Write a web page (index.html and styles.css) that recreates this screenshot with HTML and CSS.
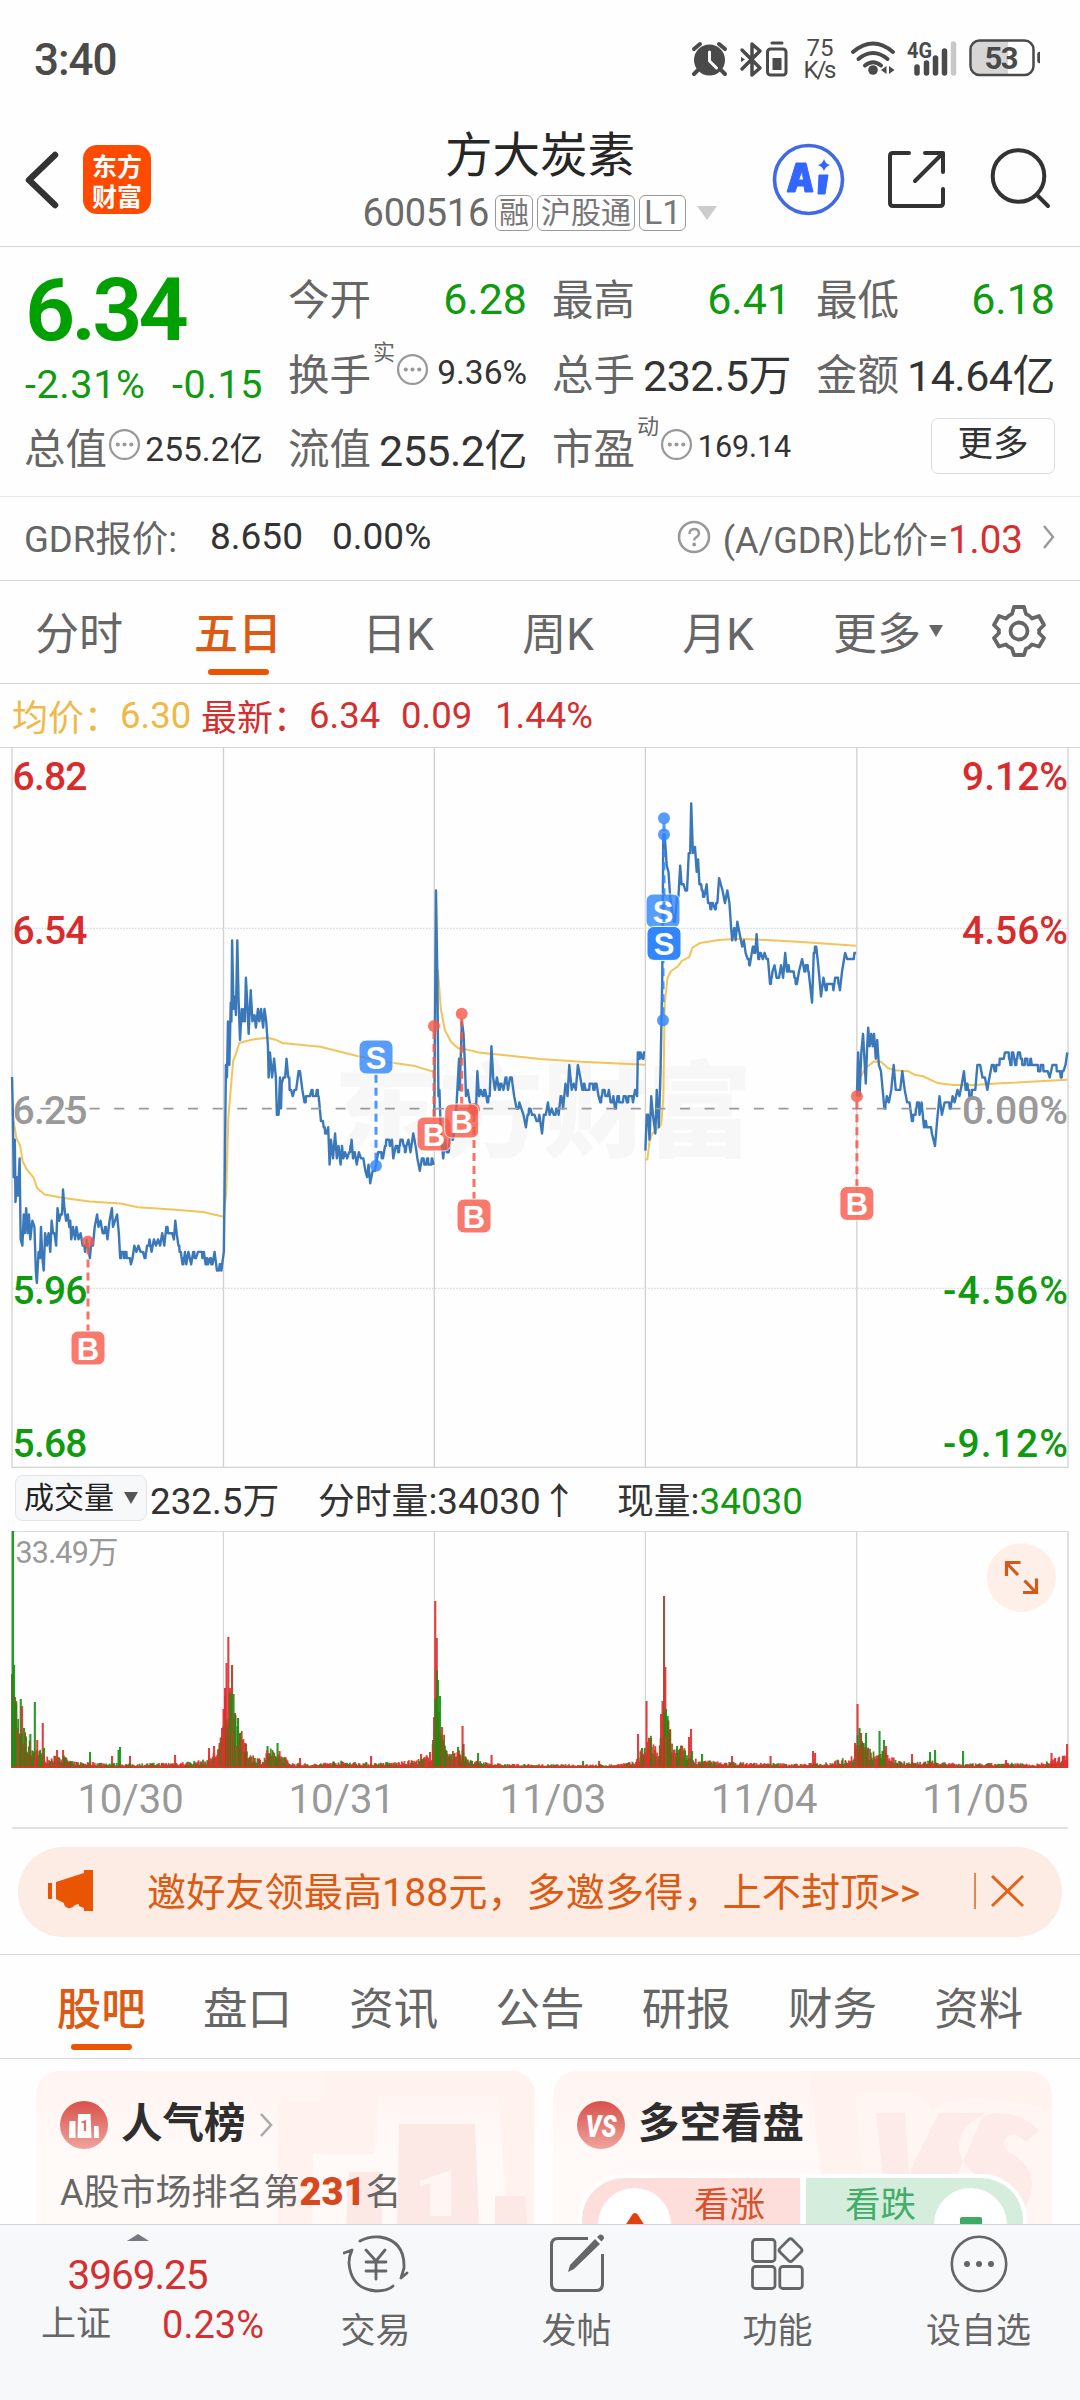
FILE: index.html
```html
<!DOCTYPE html>
<html lang="zh-CN">
<head>
<meta charset="utf-8">
<title>方大炭素 600516</title>
<link rel="stylesheet" href="styles.css">
</head>
<body>
<div class="screen">
  <div class="status">
    <span class="clock">3:40</span>
    <svg class="status-icons" width="360" height="60" viewBox="680 30 360 60">
      <g fill="#4a4a4a" stroke="#4a4a4a" stroke-linecap="round">
        <circle cx="709.500" cy="60" r="15.500" stroke="none"/>
        <path d="M694 49l6-5M725 49l-6-5M698 70l-4 4M721 70l4 4" stroke-width="4" fill="none"/>
        <path d="M709.500 52v9l7 7" stroke="#fff" stroke-width="3" fill="none"/>
        <path d="M742 50l18 18-8 7V44l8 7-18 18" fill="none" stroke-width="3.500" stroke-linejoin="round"/>
        <path d="M741 57l4 2.500-4 2.500z" stroke="none"/>
        <path d="M772 43h10" stroke-width="3"/>
        <rect x="767.500" y="49" width="18.500" height="26" rx="3" fill="none" stroke-width="3"/>
        <rect x="772.500" y="58" width="9" height="12" stroke="none"/>
        <path d="M853 52q20-17 40 0M858.500 59q14.500-12 29 0M865 65.500q8-6.500 16 0" fill="none" stroke-width="4"/>
        <circle cx="873" cy="70" r="4.800" stroke="none"/>
        <path d="M881 70l5.500-4v8zM894.500 70l-5.500-4v8z" stroke="none"/>
        <path d="M917 67v6M926.500 63v10M935.500 58v15M944.500 51v22" stroke-width="5.500"/>
        <path d="M953.500 44v29" stroke="#c8c8c8" stroke-width="5.500"/>
        <path d="M980 41h28v34h-28q-8 0-8-8V49q0-8 8-8z" fill="#d6d6d6" stroke="none"/>
        <rect x="970.500" y="40.500" width="63" height="34.500" rx="9" fill="none" stroke-width="2.500"/>
        <path d="M1039.500 54v7" stroke-width="4.500"/>
      </g>
      <g class="status-text">
        <text x="820" y="56" font-size="24" text-anchor="middle">75</text>
        <text x="820" y="78" font-size="24" text-anchor="middle" textLength="33">K/s</text>
        <text x="907" y="58" font-size="22" font-weight="700" textLength="25" lengthAdjust="spacingAndGlyphs">4G</text>
        <text x="1001.500" y="69" font-size="31" font-weight="700" text-anchor="middle" textLength="34">53</text>
      </g>
    </svg>
  </div>

  <header class="header">
    <svg class="back" width="36" height="60" viewBox="0 0 36 60"><path d="M31 5L5 30l26 25" fill="none" stroke="#333" stroke-width="6.500" stroke-linecap="round" stroke-linejoin="round"/></svg>
    <div class="logo"><span>东方</span><span>财富</span></div>
    <div class="title">
      <h1>方大炭素</h1>
      <div class="sub"><span class="code">600516</span><span class="tag">融</span><span class="tag">沪股通</span><span class="tag tag-l">L1</span><i class="caret"></i></div>
    </div>
    <svg class="actions" width="290" height="80" viewBox="770 140 290 80">
      <circle cx="808.500" cy="179.500" r="34" fill="none" stroke="#4169e6" stroke-width="3.600"/>
      <path fill="#3366ff" stroke="#3366ff" stroke-width="1" stroke-linejoin="round" fill-rule="evenodd" d="M796 163h10l7 29h-8l-1-6h-7l-2 6h-8zM802 171l-3.500 9h5zM819 175h9l-3 19h-7z"/>
      <path fill="#3366ff" d="M824 159q1.500 5 6 6-4.500 1.500-6 6-1.500-4.500-6-6 4.500-1 6-6z"/>
      <g fill="none" stroke="#333" stroke-width="4" stroke-linecap="round" stroke-linejoin="round">
        <path d="M909 153h-16q-3 0-3 3v47q0 3 3 3h47q3 0 3-3v-14M925 153h18v19M943 153l-28 28"/>
        <circle cx="1018.500" cy="176" r="25.800"/><path d="M1037 195l11 11"/>
      </g>
    </svg>
  </header>

  <section class="quote">
    <div class="price">6.34</div>
    <div class="cell"><b>今开</b><span class="v down">6.28</span></div>
    <div class="cell"><b>最高</b><span class="v down">6.41</span></div>
    <div class="cell"><b>最低</b><span class="v down">6.18</span></div>
    <div class="chg"><span>-2.31%</span><span>-0.15</span></div>
    <div class="cell"><b>换手<sup>实</sup></b><svg class="dots" viewBox="0 0 32 32"><use href="#dots"/></svg><span class="v small">9.36%</span></div>
    <div class="cell"><b>总手</b><span class="v">232.5万</span></div>
    <div class="cell"><b>金额</b><span class="v">14.64亿</span></div>
    <div class="cell"><b>总值</b><svg class="dots" viewBox="0 0 32 32"><use href="#dots"/></svg><span class="v small">255.2亿</span></div>
    <div class="cell"><b>流值</b><span class="v">255.2亿</span></div>
    <div class="cell"><b>市盈<sup>动</sup></b><svg class="dots" viewBox="0 0 32 32"><use href="#dots"/></svg><span class="v tiny">169.14</span></div>
    <div class="cell"><span class="more">更多</span></div>
  </section>

  <section class="gdr">
    <span class="gdr-name">GDR报价:</span><span class="gdr-a">8.650</span><span class="gdr-b">0.00%</span>
    <svg class="help" width="34" height="34" viewBox="0 0 34 34"><circle cx="17" cy="17" r="15" fill="none" stroke="#999" stroke-width="2.600"/><path d="M12.500 14q0-5 4.700-5t4.700 4.300q0 2.500-2.700 4-2 1.200-2 3.200" fill="none" stroke="#999" stroke-width="2.400"/><circle cx="17.200" cy="24.500" r="1.900" fill="#999"/></svg>
    <span class="gdr-r">(A/GDR)比价=<em>1.03</em></span>
    <svg width="14" height="26" viewBox="0 0 14 26"><path d="M2 2l9 11-9 11" fill="none" stroke="#999" stroke-width="2.400"/></svg>
  </section>

  <nav class="tabs">
    <span>分时</span><span class="on">五日</span><span>日K</span><span>周K</span><span>月K</span><span>更多<i class="caret-s"></i></span>
    <span><svg width="54" height="54" viewBox="-27 -27 54 54"><path d="M-5-24H5L7-17Q11-15.500 13-12.500L20-15 25-6 20-1Q20.500 0 20 2L25 7 20 15.500 13 13.500Q10 17 7 17.500L5 24H-5L-7 17.500Q-11 16-13 13.500L-20 15.500-25 7-20 2Q-20.500 0-20-1L-25-6-20-15-13-12.500Q-10-16-7-17Z" fill="none" stroke="#666" stroke-width="3.800" stroke-linejoin="round"/><circle r="8.500" fill="none" stroke="#666" stroke-width="3.800"/></svg></span>
  </nav>

  <div class="avg"><span class="y w108">均价：</span><span class="y w81">6.30</span><span class="w108">最新：</span><span class="w92">6.34</span><span class="w94">0.09</span><span>1.44%</span></div>

  <section class="chart">
    <svg class="plot" width="1080" height="740" viewBox="0 0 3136 1568" preserveAspectRatio="none">
      <g id="grid" fill="none"></g>
    </svg>
    <svg class="plot" width="1080" height="740" viewBox="0 740 1080 740">
      <text class="watermark" x="543" y="1149" text-anchor="middle" textLength="418" lengthAdjust="spacingAndGlyphs">东方财富</text>
    </svg>
    <svg class="plot" width="1080" height="740" viewBox="0 0 3136 1568" preserveAspectRatio="none">
      <g id="lines" fill="none"></g>
    </svg>
    <svg class="plot" width="1080" height="740" viewBox="0 740 1080 740">
      <g id="axis"></g>
      <g id="marks"></g>
    </svg>
  </section>

  <div class="vol-head">
    <span class="pill">成交量<i class="caret-p"></i></span><span class="vh-a">232.5万</span><span class="vh-b">分时量:34030↑</span><span class="vh-c">现量:<em>34030</em></span>
  </div>
  <section class="volume">
    <svg width="1080" height="238" viewBox="0 1531 1080 238">
      <path d="M12 1531.500H1068" stroke="#ddd" stroke-width="1.200"/>
      <path d="M223.400 1531v237M434.400 1531v237M645.400 1531v237M856.700 1531v237" stroke="#d4d4d4" stroke-width="1.200"/>
      <path d="M1068 1531v237" stroke="#e0e0e0" stroke-width="2"/>
      <g id="bars"></g>
      <text x="15.500" y="1563" font-size="30.500" fill="#999" textLength="103">33.49万</text>
      <circle cx="1021.400" cy="1577.500" r="34.500" fill="#fef0e9"/>
      <path d="M1018 1575l-11-11.500M1006.500 1576v-13.500h14M1024.500 1580.500l11 11.500M1023 1592.500h13.500v-14" fill="none" stroke="#d35a1b" stroke-width="3.200"/>
    </svg>
  </section>
  <div class="dates"><span>10/30</span><span>10/31</span><span>11/03</span><span>11/04</span><span>11/05</span></div>

  <div class="banner">
    <svg width="46" height="42" viewBox="0 0 46 42"><path d="M0 13h4v16H0zM8 12l28-9V0h9v41h-9v-3l-5-2V34l-4 1q-3 4-7 3-4-1-4-5L8 29z" fill="#ea5504"/></svg>
    <span>邀好友领最高188元，多邀多得，上不封顶&gt;&gt;</span>
    <svg class="close" width="52" height="38" viewBox="0 0 52 38"><path d="M1 1v36" stroke="#d9702f" stroke-width="1.600"/><path d="M18 4l31 30M49 4L18 34" stroke="#e2631c" stroke-width="3" fill="none"/></svg>
  </div>

  <nav class="tabs2"><span class="on">股吧</span><span>盘口</span><span>资讯</span><span>公告</span><span>研报</span><span>财务</span><span>资料</span></nav>

  <section class="cards">
    <article class="card">
      <svg class="card-bg" width="498" height="153" viewBox="37 2071 498 153">
        <path d="M279 2102h46l1-31h209v153h-27l-8-128H379l-4 58h-61l-1 70h-34z" fill="#fff2ef"/>
        <path d="M400 2124h76l4 100h-82zM350 2172h34l-1 52h-36zM496 2196h30l2 28h-32z" fill="#fce9e6"/>
        <path d="M421 2181l31-11v46h-21v-33l-10 3z" fill="#fff6f3"/>
      </svg>
      <div class="card-row"><svg width="48" height="48" viewBox="0 0 48 48"><circle cx="24" cy="24" r="24" fill="url(#red)"/><path d="M9.500 20h6v17H9zM18 13h12.500l1 24H17.500zM34 25h4.500l.5 12h-5z" fill="#fff"/><text x="24.500" y="30" font-size="14" font-weight="700" fill="#dc6660" text-anchor="middle">1</text></svg>
      <h2>人气榜</h2><svg width="14" height="26" viewBox="0 0 14 26"><path d="M2 2l10 11L2 24" fill="none" stroke="#aaa" stroke-width="2.600"/></svg></div>
      <p>A股市场排名第<strong>231</strong>名</p>
    </article>
    <article class="card">
      <svg class="card-bg" width="499" height="153" viewBox="553 2071 499 153">
        <path d="M809 2071h243v153H827z" fill="#fff2ef"/>
        <path d="M855 2092h65l12 18q30-22 120 0v114H868z" fill="#fff6f3"/>
        <path d="M876 2113h29l4 60 30-60h45l-48 111h-48zM1039 2130q-20-20-48-16-28 5-32 30-1 20 22 34 12 8 4 17-12 10-32-6l-12 35h60q28-8 31-38 1-20-20-32-12-7-6-16 8-8 20 4z" fill="#fdebe9"/>
      </svg>
      <div class="card-row"><svg width="48" height="48" viewBox="0 0 48 48"><circle cx="24" cy="24" r="24" fill="url(#red)"/><text x="24" y="36" font-size="31" font-weight="900" font-style="italic" fill="#fff" text-anchor="middle" textLength="31" lengthAdjust="spacingAndGlyphs">VS</text></svg>
      <h2>多空看盘</h2></div>
      <div class="vote">
        <div class="bull"><i><svg width="24" height="40" viewBox="0 0 24 40"><path d="M12 0q2 0 3 2l9 14v24H0V16L9 2q1-2 3-2z" fill="#e2400f"/></svg></i>看涨</div>
        <div class="bear">看跌<i><svg width="24" height="40" viewBox="0 0 24 40"><path d="M3 4h18q2 0 2 2v8H1V6q0-2 2-2z" fill="#3dab64"/></svg></i></div>
      </div>
    </article>
  </section>

  <footer class="nav">
    <div class="index"><i></i><strong>3969.25</strong><div><span>上证</span><em>0.23%</em></div></div>
    <div class="item"><svg width="66" height="60" viewBox="343 2234 66 60"><g fill="none" stroke="#666" stroke-width="2.800" stroke-linecap="round" stroke-linejoin="round"><path d="M360 2241q9-5 20-4 25 4 24 31l-3 10 6-5M393 2286q-5 5-17 5-25-2-27-28 0-7 3-13l-8 3M366 2250l10 11 9-11M376 2261v18M366 2262h20M366 2271h20"/></g></svg><span>交易</span></div>
    <div class="item"><svg width="60" height="60" viewBox="547 2234 60 60"><path d="M588 2238.500h-30q-6.500 0-6.500 6.500v39q0 6.500 6.500 6.500h38q6.500 0 6.500-6.500v-30" fill="none" stroke="#666" stroke-width="3"/><path d="M568 2272l2-7 25-26 5 5-26 25zM597 2237l3-2.500q4 0 4 4l-2.500 3z" fill="#666"/></svg><span>发帖</span></div>
    <div class="item"><svg width="60" height="60" viewBox="749 2234 60 60"><g fill="none" stroke="#666" stroke-width="2.800"><rect x="753.500" y="2239.500" width="22.500" height="22" rx="3"/><rect x="753.500" y="2266.500" width="22.500" height="22" rx="3"/><rect x="780.800" y="2266.500" width="22.500" height="22" rx="3"/><rect x="782.500" y="2241.500" width="17.500" height="17.500" rx="2.500" transform="rotate(45 791.500 2250.500)"/></g></svg><span>功能</span></div>
    <div class="item"><svg width="60" height="60" viewBox="949 2234 60 60"><circle cx="979" cy="2264" r="27.200" fill="none" stroke="#666" stroke-width="2.600"/><circle cx="967" cy="2264" r="3" fill="#666"/><circle cx="979" cy="2264" r="3" fill="#666"/><circle cx="991" cy="2264" r="3" fill="#666"/></svg><span>设自选</span></div>
  </footer>
</div>

<svg class="defs" width="0" height="0">
  <defs>
    <linearGradient id="red" x1="0" y1="0" x2="0" y2="1"><stop offset="0" stop-color="#d9504a"/><stop offset="1" stop-color="#f0a39d"/></linearGradient>
    <symbol id="dots" viewBox="0 0 32 32"><circle cx="16" cy="16" r="14" fill="none" stroke="#999" stroke-width="2.200"/><circle cx="9.500" cy="16" r="2" fill="#999"/><circle cx="16" cy="16" r="2" fill="#999"/><circle cx="22.500" cy="16" r="2" fill="#999"/></symbol>
  </defs>
</svg>
<script src="chart.js"></script>
</body>
</html>
```
FILE: styles.css
```css
* { box-sizing: border-box; }
body { margin: 0; background: #fff; color: #333; font-family: Roboto, "Noto Sans CJK SC", sans-serif; }
.screen { width: 1080px; height: 2400px; overflow: hidden; display: flex; flex-direction: column; background: #fefefe; }
.screen > * { flex: none; }
svg { display: block; }
em, i { font-style: normal; }
.defs { position: absolute; }

.status { height: 115px; display: flex; justify-content: space-between; padding: 30px 40px 0 34px; }
.clock { font-size: 44px; line-height: 60px; font-weight: 500; color: #4a4a4a; letter-spacing: -1px; }
.status-text { fill: #4a4a4a; }

.header { height: 132px; display: flex; align-items: center; border-bottom: 1px solid #d4d4d4; padding: 0 20px 2px 24px; }
.back { margin-right: 23px; }
.logo { width: 68px; height: 69px; border-radius: 14px; background: #ff4a00; color: #fff; display: flex; flex-direction: column; justify-content: center; font: 700 25px/30px "Noto Sans CJK SC", sans-serif; text-align: center; }
.title { width: 378px; margin-left: 200px; display: flex; flex-direction: column; align-items: center; padding-top: 7px; }
.title h1 { margin: 0; font-size: 47.500px; line-height: 60px; font-weight: 400; color: #262626; }
.sub { display: flex; align-items: center; height: 54px; gap: 4px; color: #777; }
.code { font-size: 38px; letter-spacing: -.3px; margin-right: 2px; color: #6a6a6a; }
.tag { height: 36px; line-height: 33px; border: 1.500px solid #999; border-radius: 6px; font-size: 30px; padding: 0 3px; }
.tag-l { font-size: 34px; padding: 0 4px; }
.caret { border: 10.500px solid transparent; border-top: 14px solid #ccc; border-bottom: 0; margin-left: 7px; }
.actions { margin-left: 41px; }

.quote { height: 250px; padding: 12px 25px 0; display: grid; grid-template-columns: repeat(4, 238px); grid-auto-rows: 74.500px; column-gap: 26px; border-bottom: 1.500px solid #eaeaea; }
.price { font-size: 88px; line-height: 101px; font-weight: 600; color: #00a000; letter-spacing: -4px; }
.chg { display: flex; justify-content: space-between; align-items: center; font-size: 39.500px; padding-top: 29px; color: #0f9a0f; letter-spacing: .6px; line-height: 50px; }
.cell { display: flex; align-items: center; padding-top: 2px; }
.cell b { font-weight: 400; font-size: 41.500px; color: #666; display: flex; flex: none; white-space: nowrap; margin-left: -1px; }
.cell sup { font-size: 22px; line-height: 22px; padding-left: 2px; }
.dots { width: 33px; height: 33px; flex: none; margin-left: 1px; margin-top: -4px; }
.v { margin-left: auto; font-size: 43px; white-space: nowrap; letter-spacing: -.5px; padding-top: 1px; }
.v.small { font-size: 33.500px; letter-spacing: 0; }
.v.tiny { font-size: 30.500px; letter-spacing: -.1px; }
.down { color: #0f9a0f; padding-top: 3px; letter-spacing: 0; }
.more { margin-left: auto; width: 124px; height: 56px; border: 1.500px solid #ddd; border-radius: 7px; font-size: 35.500px; line-height: 51px; text-align: center; }

.gdr { height: 84px; display: flex; align-items: center; border-bottom: 1.500px solid #d6d6d6; padding: 0 24px 4px; font-size: 37px; }
.gdr-name { width: 186px; color: #666; font-size: 36.500px; }
.gdr-a { width: 122px; }
.help { margin-left: auto; margin-right: 12px; }
.gdr-r { color: #666; margin-right: 19px; font-size: 36px; }
.gdr-r em { color: #d62f2f; font-size: 38.500px; }

.tabs { height: 103px; display: grid; grid-template-columns: 158px repeat(4, 160px) 180px 82px; border-bottom: 1.500px solid #d4d4d4; font-size: 44px; color: #666; }
.tabs span, .tabs2 span { display: flex; align-items: center; justify-content: center; position: relative; padding-bottom: 3px; }
.tabs .on, .tabs2 .on { color: #dd5a12; font-weight: 500; }
.on::after { content: ""; position: absolute; left: 50%; margin-left: -30.500px; bottom: 8px; width: 61px; height: 6px; border-radius: 3px; background: #ea5504; }
.caret-s { border: 7.500px solid transparent; border-top: 12px solid #666; border-bottom: 0; margin-left: 8px; }

.avg { height: 64px; display: flex; align-items: center; padding: 0 0 1px 12px; border-bottom: 1.500px solid #d6d6d6; font-size: 36.500px; color: #d32f2f; white-space: nowrap; }
.y { color: #efb947; }
.w108 { width: 108px; font-size: 36px; }
.w81 { width: 81px; }
.w92 { width: 92px; }
.w94 { width: 94px; }

.chart { height: 720px; position: relative; overflow: hidden; }
.plot { position: absolute; left: 0; top: -8px; }
.watermark { font-size: 104px; font-weight: 900; fill: #f7f7f7; }
.badge { font: 700 31px "Liberation Sans", sans-serif; fill: #fff; }

.vol-head { height: 63px; display: flex; align-items: center; padding: 0 0 3px 15px; font-size: 36.800px; white-space: nowrap; }
.pill { width: 132px; height: 46px; border: 1.500px solid #e4e4ea; border-radius: 8px; background: #f7f8fa; font-size: 30px; line-height: 42px; padding-left: 8px; display: flex; align-items: center; color: #222; }
.caret-p { border: 7.500px solid transparent; border-top: 12px solid #555; border-bottom: 0; margin-left: 10px; }
.vh-a { width: 168px; margin-left: 3px; }
.vh-b { width: 299px; }
.vh-c em { color: #0f9a0f; }
.volume { height: 237px; }
.dates { height: 61px; margin: 0 12px; padding-left: 13px; display: grid; grid-template-columns: repeat(5, 211.200px); font-size: 40px; line-height: 63px; color: #999; text-align: center; border-bottom: 2px solid #e2e2e2; }
.banner { margin: 18px 18px 17px; height: 90px; border-radius: 45px; background: #fcece3; display: flex; align-items: center; padding: 0 36px 3px 30px; font-size: 39.200px; color: #dc5b14; white-space: nowrap; }
.banner span { margin-left: 53px; margin-top: -4px; }
.close { margin-left: auto; }

.tabs2 { height: 105px; border-top: 1.500px solid #d6d6d6; border-bottom: 1.500px solid #d6d6d6; padding: 0 28px; display: grid; grid-template-columns: repeat(7, 1fr); font-size: 44.500px; color: #666; }

.cards { height: 165px; padding: 12px 28px 0 36px; display: flex; gap: 18px; overflow: hidden; }
.card { position: relative; width: 499px; height: 230px; flex: none; border-radius: 24px; overflow: hidden; background: linear-gradient(#fff4f1, #fffaf8 90px); padding: 24px 24px 0; }
.card-bg { position: absolute; left: 0; top: 0; }
.card-row { position: relative; display: flex; align-items: center; height: 60px; gap: 13px; }
.card h2 { margin: 0; font-size: 41.500px; line-height: 60px; font-weight: 700; color: #2e2e2e; padding-bottom: 2px; }
.card p { position: relative; margin: 12px 0 0; font-size: 36px; line-height: 50px; color: #666; white-space: nowrap; }
.card strong { color: #d9481c; font-size: 38px; font-weight: 900; }
.vote { position: relative; margin: 19px 0 0 1px; width: 449px; height: 92px; border: 4px solid #fff; border-radius: 46px; display: flex; gap: 6px; background: #fff; overflow: hidden; font-size: 35.500px; line-height: 55px; }
.bull, .bear { flex: 1; display: flex; }
.bull { background: #fddeda; color: #d9512a; gap: 23px; }
.bear { background: #d5eddc; color: #43ad69; justify-content: flex-end; gap: 18px; }
.vote i { width: 73px; height: 73px; border-radius: 50%; background: #fff; display: flex; justify-content: center; padding-top: 25px; margin-top: 10px; }
.bull i { margin-left: 16px; }
.bear i { margin-right: 16px; }

.nav { height: 177px; background: #f7f8fa; border-top: 1.500px solid #cfd2d6; display: grid; grid-template-columns: 275px repeat(4, 201px); }
.index { display: flex; flex-direction: column; align-items: center; color: #d62f2f; }
.index i { border: 11px solid transparent; border-bottom: 7px solid #777a80; border-top: 0; margin-top: 9px; }
.index strong { font-weight: 400; font-size: 40.500px; line-height: 46px; margin-top: 11px; letter-spacing: -1px; }
.index div { display: flex; gap: 51px; align-items: center; margin-left: 30px; line-height: 50px; margin-top: 2px; font-size: 38px; }
.index span { color: #666; font-size: 35px; }
.item { display: flex; flex-direction: column; align-items: center; padding-top: 9px; color: #666; font-size: 35px; line-height: 50px; }
.item span { margin-top: 13px; }
```
FILE: chart.js
```js
const NS = 'http://www.w3.org/2000/svg';
function add(parent, tag, attrs, text) {
  const el = document.createElementNS(NS, tag);
  for (const k in attrs) el.setAttribute(k, attrs[k]);
  if (text) el.textContent = text;
  document.getElementById(parent).appendChild(el);
}
let seed = 7;
function rnd() { seed = (seed * 16807) % 2147483647; return seed / 2147483647; }

// Grid: day separators, dotted quarter lines, previous-close line
const R = 1568;
function line(parent, d, stroke, w, dash) {
  add(parent, 'path', { d, stroke, 'stroke-width': w, 'vector-effect': 'non-scaling-stroke', 'stroke-dasharray': dash || 'none', 'stroke-linejoin': 'round' });
}
line('grid', 'M35 16V1542M3101 16V1542', '#e0e0e0', 2);
line('grid', 'M649 16V1542M1261 16V1542M1874 16V1542M2488 16V1542', '#d0d0d0', 1.3);
line('grid', 'M35 1542H3101', '#d4d4d4', 2);
line('grid', 'M35 399H3101M35 1162H3101', '#d8d8d8', 1.2, '1.5 1.5');

// Price, one string of x,y pairs per trading day
const days = [
  [0, '35,714 37,780 40,925 43,850 45,978 49,930 52,965 57,890 60,1060 65,1072 69,1010 72,1045 76,997 80,1045 84,1010 88,1055 94,1022 100,1035 104,1130 107,1153 112,1090 116,1100 119,1037 123,1100 127,1125 131,1050 136,1075 141,1050 146,1085 150,1022 154,1045 158,1040 163,1072 167,995 172,1020 176,1000 180,1010 183,956 187,995 192,1020 197,1010 201,1035 204,1012 207,1055 212,1035 218,1060 222,1035 228,1060 234,1048 240,1065 247,1085 252,1060 258,1085 261,1100 266,1060 270,1072 275,1035 282,1010 286,1035 292,1025 298,1040 305,1035 312,1055 318,1022 325,997 328,1035 334,1020 340,1010 345,1050 349,1100 357,1088 364,1090 372,1100 380,1113 385,1100 390,1075 396,1088 402,1075 408,1085 415,1078 420,1095 427,1075 434,1062 440,1085 447,1060 453,1075 459,1055 465,1072 471,1050 477,1065 483,1035 492,1040 500,1048 505,1060 509,1022 513,1050 518,1072 525,1088 530,1112 537,1090 541,1110 547,1080 555,1105 561,1090 569,1100 575,1080 583,1090 592,1088 597,1105 604,1110 610,1098 617,1105 623,1088 630,1125 638,1115 645,1110 650,1080 653,900 656,690 659,720 662,600 666,690 670,560 672,600 674,420 678,570 683,540 685,580 689,420 693,560 697,630 702,575 705,600 709,570 711,600 714,500 718,560 722,618 728,530 733,600 739,585 743,605 749,575 753,600 758,570 764,605 768,575 773,600 778,650 780,712 784,660 790,710 796,675 801,710 804,790 809,790 813,720 816,780 818,730 823,715 828,715 832,675 837,720 845,740 850,750 855,735 860,740 867,705 871,702 878,740 884,765 893,755 900,755 905,743 912,755 920,743 927,765 932,805 940,820 948,835 953,820 957,900 961,850 967,880 973,840 978,880 983,860 989,900 993,860 997,885 1002,870 1008,885 1014,870 1021,850 1025,885 1030,870 1036,895 1042,875 1048,890 1055,880 1061,910 1066,925 1070,905 1075,938 1082,910 1088,912 1092,895 1098,870 1105,875 1112,880 1118,862 1125,850 1132,862 1138,850 1142,885 1149,855 1156,870 1163,850 1172,862 1180,862 1186,850 1192,870 1200,838 1207,862 1212,880 1219,912 1225,880 1232,900 1240,888 1248,900 1259,895'],
  [0, '1261,800 1263,610 1266,314 1270,500 1273,760 1276,740 1280,830 1287,885 1292,850 1297,872 1303,870 1308,840 1315,850 1322,825 1327,755 1333,675 1335,740 1341,590 1346,625 1350,690 1353,750 1358,740 1364,770 1370,780 1378,800 1383,765 1386,702 1391,750 1396,735 1402,750 1409,735 1415,762 1422,750 1427,648 1432,710 1437,735 1443,715 1449,740 1456,725 1462,738 1468,715 1475,735 1481,715 1488,730 1493,755 1500,785 1508,770 1514,785 1520,790 1527,820 1532,790 1540,782 1545,800 1552,795 1558,805 1566,798 1574,832 1579,795 1585,800 1591,770 1596,790 1602,780 1608,792 1615,785 1622,790 1628,755 1635,778 1642,730 1648,750 1653,690 1660,740 1666,725 1672,738 1678,690 1685,715 1691,740 1700,735 1708,740 1716,728 1723,738 1732,728 1738,755 1743,765 1750,745 1758,752 1768,742 1773,765 1781,760 1786,778 1793,755 1803,765 1811,755 1820,765 1830,750 1838,765 1844,745 1850,755 1852,662 1860,662 1866,673 1873,662'],
  [R, '306,870 310,800 314,795 318,845 323,757 328,800 335,832 339,745 345,820 350,700 355,500 358,200 362,200 368,260 373,280 378,330 385,370 392,390 398,330 402,335 407,262 411,310 417,300 422,322 427,320 432,245 436,240 439,140 444,240 450,220 455,285 459,250 463,300 470,320 477,335 484,300 488,340 495,352 502,340 508,352 515,340 520,288 525,310 530,325 537,350 544,325 550,345 555,400 558,430 564,395 568,418 573,380 580,415 587,440 592,425 597,455 603,470 612,465 618,440 625,450 629,408 634,460 641,450 647,465 652,450 658,470 662,460 668,512 675,490 681,475 687,500 694,510 700,475 706,500 712,447 717,485 724,485 731,495 739,500 746,512 752,490 761,462 768,490 775,480 782,500 790,552 795,450 802,432 808,480 816,540 823,510 830,535 837,512 845,515 852,535 857,500 862,505 871,525 877,485 886,447 892,470 899,458 906,460 913,447 918,455'],
  [R, '920,755 924,662 928,750 933,665 938,622 942,680 946,725 950,650 953,608 957,645 962,625 966,650 970,622 975,680 979,635 984,690 990,700 995,740 1000,778 1007,755 1013,765 1020,740 1027,690 1033,735 1040,735 1046,735 1052,702 1059,740 1066,765 1073,770 1080,803 1088,790 1095,770 1102,790 1108,770 1115,820 1123,820 1130,825 1138,830 1147,858 1153,805 1160,755 1167,790 1175,765 1183,765 1190,775 1198,755 1204,765 1212,740 1218,760 1225,730 1231,702 1236,735 1243,740 1250,752 1258,735 1264,735 1270,690 1278,690 1285,715 1292,712 1299,740 1305,715 1312,690 1320,700 1330,685 1340,680 1350,662 1358,665 1366,685 1374,665 1380,685 1388,665 1396,675 1405,682 1412,675 1420,685 1428,682 1435,695 1443,690 1450,700 1458,695 1466,708 1474,700 1480,712 1488,685 1496,695 1505,698 1512,712 1520,705 1526,690 1531,662']
];
const averages = [
  [0, '35,780 40,810 48,845 58,858 66,893 78,910 98,928 108,950 130,963 180,970 260,978 350,982 400,990 500,995 590,1000 649,1010 657,960 663,800 670,740 677,680 685,665 695,642 730,635 775,631 800,635 820,642 930,650 1040,670 1150,685 1200,690 1259,703'],
  [0, '1266,480 1272,490 1280,570 1292,615 1310,640 1330,653 1350,655 1390,662 1568,676 1688,682 1873,688'],
  [R, '306,890 312,888 318,850 325,835 352,815 358,760 362,560 370,505 380,490 400,480 412,468 433,460 443,440 465,430 520,424 580,421 760,428 918,436'],
  [R, '920,755 930,715 945,695 970,681 990,682 1010,695 1030,700 1070,702 1090,710 1110,712 1155,727 1200,731 1260,731 1350,727 1531,720']
];
const pairs = ([dx, s]) => s.split(' ').map(p => p.split(',').map(Number)).map(([x, y]) => [x + dx, y]);
averages.forEach(a => line('lines', 'M' + pairs(a).join('L'), '#f2c45a', 2));

// Prices move in 0.01 steps; one step is 13.2 units
const snap = y => 781 + Math.round((y - 781) / 13.2) * 13.2;
days.forEach(day => {
  const pts = pairs(day);
  let d = 'M' + pts[0];
  for (let i = 1; i < pts.length; i++) {
    const [x0, y0] = pts[i - 1], [x1, y1] = pts[i];
    if (x1 - x0 > 6 && Math.abs(y1 - y0) < 24) {
      const m = (x0 + x1) / 2, y = snap((y0 + y1) / 2 + (rnd() - .5) * 16);
      d += `L${m - 1},${snap(y0)}L${m},${y}L${m + 1.5},${y}`;
    }
    d += `L${x1},${snap(y1)}`;
  }
  line('lines', d, '#3a78ba', 2.4);
});
line('lines', 'M46 781H3101', '#999', 1.8, '10 14.6');

// Axis labels
const labels = [['6.82', '9.12%', 790, '#d92b2b'], ['6.54', '4.56%', 943.5, '#d92b2b'], ['6.25', '0.00%', 1123.7, '#999'], ['5.96', '-4.56%', 1303.5, '#0f9a0f'], ['5.68', '-9.12%', 1456.5, '#0f9a0f']];
labels.forEach(([l, r, y, fill]) => {
  add('axis', 'text', { x: 12.5, y, fill, 'font-size': 39, 'font-weight': 500, textLength: 75 }, l);
  add('axis', 'text', { x: 1068, y, fill, 'font-size': 39, 'font-weight': 500, 'text-anchor': 'end', textLength: r[0] === '-' ? 125 : 106 }, r);
});

// Trade markers
const marks = [
  ['B', 88, [1241.6], 1348, 1], ['S', 376, [1165.7], 1057, -1], ['B', 434, [1026], 1134, 1],
  ['B', 474, [1109], 1216, 1], ['B', 461.7, [1013.7], 1121, 1], ['S', 663, [1020.3], 911, -1],
  ['S', 664, [818.3, 834.4], 943.4, 1], ['B', 856.9, [1096.3], 1203.4, 1]
];
marks.forEach(([t, x, dots, y, dir], i) => {
  const c = t === 'B' ? '#f95a49' : '#3186fb';
  add('marks', 'path', { d: `M${x} ${dots[0] + 5 * dir}V${y - 17 * dir}`, stroke: c, 'stroke-width': 3, 'stroke-dasharray': '8 5', opacity: .85 });
  dots.forEach(dy => add('marks', 'circle', { cx: x, cy: dy, r: 6, fill: c, opacity: .82 }));
  add('marks', 'rect', { x: x - 17, y: y - 17, width: 34, height: 34, rx: 7, fill: c, stroke: '#fff', 'stroke-width': 1, opacity: i === 6 ? 1 : .8 });
  add('marks', 'text', { x, y: y + 11.5, class: 'badge', 'text-anchor': 'middle' }, t);
});

// Volume: envelope of small bars, then the individual peaks
const env = [[12, 80], [17, 55], [22, 36], [30, 24], [40, 17], [48, 9], [60, 14], [72, 6], [90, 6], [130, 4], [185, 6], [205, 8], [215, 17], [221, 32], [225, 85], [232, 72], [238, 42], [244, 24], [252, 13], [262, 8], [268, 22], [274, 13], [280, 15], [290, 5], [315, 4], [335, 7], [370, 5], [400, 6], [420, 9], [431, 15], [436, 92], [441, 44], [446, 19], [455, 17], [464, 17], [470, 7], [485, 6], [500, 4], [540, 3.5], [610, 3.5], [634, 6], [642, 22], [650, 30], [658, 12], [662, 66], [668, 44], [673, 18], [681, 22], [688, 12], [698, 8], [720, 6], [760, 5], [800, 4], [830, 6], [852, 12], [857, 34], [866, 20], [876, 14], [886, 17], [894, 9], [910, 6], [930, 7], [960, 4], [1010, 5], [1035, 4], [1050, 7], [1067, 14]];
const peaks = '13,94,g 14,103,g 12,94,m 16,64,r 15,71,m 20.7,69,g 22,62,r 24,40,g 30.3,34,g 34.8,66,g 37.2,28,r 42.7,45,r 44,20,g 57,18,r 63,18,r 90,16,g 112,12,r 118.5,18,g 120,21,g 130,12,r 175,13,r 209,20,r 214,22,r 219.5,25,r 222,40,r 223.5,59,r 225,80,r 226.5,105,r 228.3,131,r 230,80,r 232,103,m 233.5,74,g 235,55,m 238,50,g 240,35,g 245,25,r 267.5,22,g 277.5,25,g 279.5,17,r 300,10,r 371,12,r 421,14,r 430,16,r 433,28,g 434,51,r 435.2,167,r 436.7,130,r 438,88,g 440,72,g 442,41,r 458,21,g 462.5,42,r 463.5,24,m 478,15,g 491.5,13,r 583,7,g 599,7,r 638,34,r 642,20,g 646.5,67,r 649,30,g 651,30,r 655,18,r 661,54,r 662.5,67,r 664,172,m 665.3,101,r 666,59,g 667.5,52,g 670,38,r 677,22,g 682,22,r 689,31,r 691,39,r 692,17,g 702,14,g 732,12,r 770.5,12,r 813,17,r 815,15,r 855,25,r 857.5,64,r 859.5,40,g 861,35,m 863,25,r 866,35,g 879.5,37,g 884,28,g 886,22,r 912,14,r 930,16,g 935,18,g 963,17,g 1006,8,r 1051.5,15,r 1055,10,r 1063,12,r 1067,24,r'.split(' ');
const colors = { r: '#e12f2f', g: '#179117', m: '#a3402f' };
function bar(x, h, c, w) { add('bars', 'rect', { x, y: 1768 - h, width: w, height: h, fill: c, opacity: .92 }); }
peaks.forEach(p => { const [x, h, c] = p.split(','); bar(+x - 1, +h, colors[c], 2.1); });
for (let x = 12, k = 0; x < 1067; x += .88) {
  while (k < env.length - 2 && env[k + 1][0] < x) k++;
  const [x0, h0] = env[k], [x1, h1] = env[k + 1];
  const h = (h0 + (h1 - h0) * (x - x0) / (x1 - x0)) * (.4 + rnd() * .7);
  const falling = (x < 70) || (x > 232 && x < 290) || (x > 438 && x < 490) || (x > 666 && x < 720) || (x > 860 && x < 950);
  const v = rnd();
  bar(x, Math.max(2, h), v < (falling ? .3 : .6) ? '#e12f2f' : v < .7 ? '#8a5218' : '#2c850f', 1.8);
}
bar(11.5, 237, '#179117', 2.6);
bar(12, 1.6, '#d03a2c', 1056);
```
